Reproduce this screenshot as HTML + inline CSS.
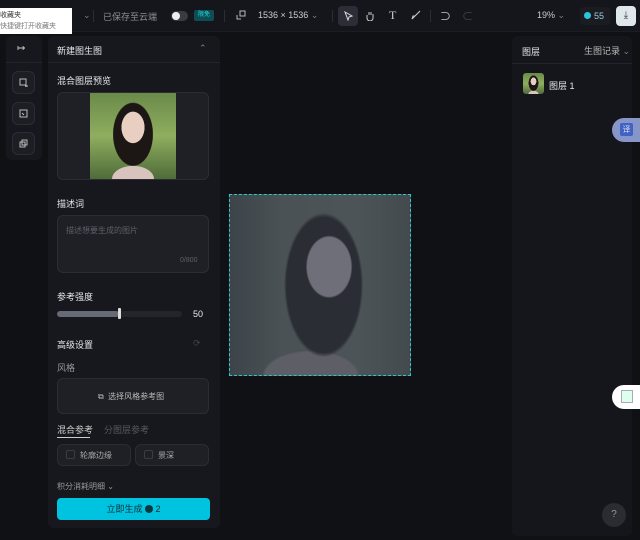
<!DOCTYPE html>
<html><head><meta charset="utf-8"><style>
*{margin:0;padding:0;box-sizing:border-box}
body{width:640px;height:540px;background:#101115;font-family:"Liberation Sans","Noto Sans CJK SC",sans-serif;color:#d8dae0;position:relative;overflow:hidden;font-size:9px}
.abs{position:absolute}
.top{left:0;top:0;width:640px;height:32px;background:#15161b;border-bottom:1px solid #1c1d22}
.panel{background:#17181d;border-radius:6px}
.t{color:#e6e8ec;font-size:9px}
.g{color:#7b7f88}
.box{background:#1f2026;border:1px solid #2b2d33;border-radius:6px}
.photo{background:radial-gradient(ellipse 22% 30% at 50% 40%,#e9cfc2 60%,transparent 62%),radial-gradient(ellipse 38% 60% at 50% 48%,#1c1714 60%,transparent 62%),radial-gradient(ellipse 40% 25% at 50% 100%,#d8c4bc 60%,transparent 62%),linear-gradient(#6a8a4a,#8fae5e 50%,#4f6b3a)}
.cphoto{background:radial-gradient(ellipse 20% 27% at 55% 40%,#6e6f78 60%,transparent 64%),radial-gradient(ellipse 34% 62% at 52% 50%,#2a2d33 60%,transparent 64%),radial-gradient(ellipse 42% 22% at 45% 100%,#5d5e66 60%,transparent 64%),linear-gradient(90deg,#3c4449,#4a5256 30%,#4c5458 70%,#424a4e)}
</style></head><body>
<div class="abs top"></div>
<div class="abs" style="left:0;top:8px;width:72px;height:26px;background:#fff;font-size:7px;color:#333;line-height:11px;padding-top:2px">收藏夹<br><span style="color:#777">快捷键打开收藏夹</span></div>
<div class="abs g" style="left:83px;top:10px;font-size:9px">⌄</div>
<div class="abs" style="left:93px;top:10px;width:1px;height:12px;background:#2c2d33"></div>
<div class="abs g" style="left:103px;top:10px;font-size:9px;color:#8a8e96">已保存至云端</div>
<div class="abs" style="left:171px;top:11px;width:17px;height:10px;border-radius:5px;background:#3a3b41"><div style="width:8px;height:8px;border-radius:4px;background:#eee;margin:1px"></div></div>
<div class="abs" style="left:194px;top:10px;width:20px;height:11px;background:#0f4d55;color:#2dd;font-size:6px;text-align:center;line-height:11px;border-radius:2px">限免</div>
<div class="abs" style="left:224px;top:10px;width:1px;height:12px;background:#2c2d33"></div>
<svg class="abs" style="left:236px;top:10px" width="10" height="10" viewBox="0 0 10 10" fill="none" stroke="#bbb"><rect x="4" y="1" width="5" height="5"/><path d="M1 5v4h4"/></svg>
<div class="abs" style="left:258px;top:10px;font-size:9px;color:#ccc">1536 × 1536 <span class="g">⌄</span></div>
<div class="abs" style="left:332px;top:10px;width:1px;height:12px;background:#2c2d33"></div>
<div class="abs" style="left:338px;top:6px;width:20px;height:20px;background:#2b2e36;border-radius:4px"></div>
<svg class="abs" style="left:343px;top:11px" width="10" height="10" viewBox="0 0 10 10" fill="none" stroke="#ddd"><path d="M2 1l7 4-3 1-1 3z"/></svg>
<svg class="abs" style="left:365px;top:10px" width="10" height="11" viewBox="0 0 10 11" fill="none" stroke="#ccc"><path d="M2 5v3a3 3 0 0 0 6 0V4M4 5V2M6 5V2"/></svg>
<div class="abs" style="left:389px;top:8px;font-size:12px;color:#ccc;font-family:'Liberation Serif'">T</div>
<svg class="abs" style="left:411px;top:10px" width="10" height="10" viewBox="0 0 10 10" fill="none" stroke="#ccc"><path d="M9 1L4 6M4 6L1 9l1-3z"/></svg>
<div class="abs" style="left:430px;top:10px;width:1px;height:12px;background:#2c2d33"></div>
<div class="abs" style="left:440px;top:8px;font-size:11px;color:#ccc">⊃</div>
<div class="abs" style="left:462px;top:8px;font-size:11px;color:#444">⊂</div>
<div class="abs" style="left:537px;top:10px;font-size:9px;color:#ccc">19% <span class="g">⌄</span></div>
<div class="abs" style="left:580px;top:7px;width:30px;height:18px;background:#1b1c21;border-radius:4px;color:#9ccbe0;font-size:9px;line-height:18px;padding-left:4px"><span style="display:inline-block;width:7px;height:7px;border-radius:4px;background:#2cc6dc;margin-right:3px"></span>55</div>
<div class="abs" style="left:616px;top:6px;width:20px;height:20px;background:#dfe6ec;border-radius:4px;color:#333;text-align:center;font-size:10px;line-height:20px">⤓</div>

<div class="abs panel" style="left:6px;top:36px;width:36px;height:124px"></div>
<div class="abs" style="left:17px;top:43px;color:#ccc;font-size:10px">↦</div>
<div class="abs" style="left:6px;top:62px;width:36px;height:1px;background:#24252b"></div>
<div class="abs box" style="left:12px;top:71px;width:23px;height:23px;background:#1d1e23"></div>
<div class="abs box" style="left:12px;top:102px;width:23px;height:23px;background:#1d1e23"></div>
<div class="abs box" style="left:12px;top:132px;width:23px;height:23px;background:#1d1e23"></div>
<svg class="abs" style="left:19px;top:78px" width="9" height="9" viewBox="0 0 9 9" fill="none" stroke="#bbb"><rect x="1" y="1" width="6" height="6"/><path d="M7 6v3M6 8h3"/></svg>
<svg class="abs" style="left:19px;top:109px" width="9" height="9" viewBox="0 0 9 9" fill="none" stroke="#bbb"><path d="M1 1h7v7H1zM3 4l2 2"/></svg>
<svg class="abs" style="left:19px;top:139px" width="9" height="9" viewBox="0 0 9 9" fill="none" stroke="#bbb"><rect x="1" y="3" width="5" height="5"/><rect x="3" y="1" width="5" height="5"/></svg>

<div class="abs panel" style="left:48px;top:36px;width:172px;height:492px"></div>
<div class="abs t" style="left:57px;top:44px">新建图生图</div>
<div class="abs g" style="left:199px;top:43px">⌃</div>
<div class="abs" style="left:48px;top:62px;width:172px;height:1px;background:#24252b"></div>
<div class="abs t" style="left:57px;top:74px">混合图层预览</div>
<div class="abs box" style="left:57px;top:92px;width:152px;height:88px"></div>
<div class="abs photo" style="left:90px;top:93px;width:86px;height:86px"></div>
<div class="abs t" style="left:57px;top:197px">描述词</div>
<div class="abs box" style="left:57px;top:215px;width:152px;height:58px"></div>
<div class="abs" style="left:66px;top:225px;color:#5c6068;font-size:8px">描述想要生成的图片</div>
<div class="abs" style="left:180px;top:257px;color:#5c6068;font-size:7px">0/800</div>
<div class="abs t" style="left:57px;top:290px">参考强度</div>
<div class="abs" style="left:57px;top:311px;width:125px;height:6px;border-radius:3px;background:#23252b"></div>
<div class="abs" style="left:57px;top:311px;width:62px;height:6px;border-radius:3px;background:#656a74"></div>
<div class="abs" style="left:118px;top:308px;width:3px;height:11px;background:#ddd;border-radius:1px"></div>
<div class="abs t" style="left:193px;top:309px">50</div>
<div class="abs t" style="left:57px;top:338px">高级设置</div>
<div class="abs" style="left:193px;top:338px;color:#444">⟳</div>
<div class="abs g" style="left:57px;top:361px;color:#999">风格</div>
<div class="abs box" style="left:57px;top:378px;width:152px;height:36px"></div>
<div class="abs" style="left:98px;top:391px;color:#bbb;font-size:8px">⧉ &nbsp;选择风格参考图</div>
<div class="abs t" style="left:57px;top:423px;color:#ccc">混合参考</div>
<div class="abs g" style="left:104px;top:423px;color:#555a62">分图层参考</div>
<div class="abs" style="left:57px;top:437px;width:33px;height:1px;background:#ccc"></div>
<div class="abs box" style="left:57px;top:444px;width:74px;height:22px"></div>
<div class="abs box" style="left:135px;top:444px;width:74px;height:22px"></div>
<div class="abs" style="left:66px;top:450px;width:9px;height:9px;border:1px solid #3a3c42;border-radius:2px"></div>
<div class="abs" style="left:144px;top:450px;width:9px;height:9px;border:1px solid #3a3c42;border-radius:2px"></div>
<div class="abs" style="left:80px;top:450px;color:#aaa;font-size:8px">轮廓边缘</div>
<div class="abs" style="left:158px;top:450px;color:#aaa;font-size:8px">景深</div>
<div class="abs g" style="left:57px;top:481px;color:#999;font-size:8px">积分消耗明细 ⌄</div>
<div class="abs" style="left:57px;top:498px;width:153px;height:22px;background:#00c3df;border-radius:4px;color:#08313a;text-align:center;line-height:22px;font-size:9px">立即生成 <span style="display:inline-block;width:8px;height:8px;border-radius:4px;background:#0b3740;vertical-align:-1px"></span> 2</div>

<div class="abs cphoto" style="left:229px;top:194px;width:182px;height:182px"></div>
<div class="abs" style="left:229px;top:194px;width:182px;height:182px;border:1px dashed #2fc4cf"></div>

<div class="abs panel" style="left:512px;top:36px;width:120px;height:500px;background:#15161b"></div>
<div class="abs t" style="left:522px;top:45px">图层</div>
<div class="abs g" style="left:584px;top:44px;color:#bbb">生图记录 <span class="g">⌄</span></div>
<div class="abs" style="left:512px;top:63px;width:120px;height:1px;background:#24252b"></div>
<div class="abs photo" style="left:523px;top:73px;width:21px;height:21px;border-radius:3px"></div>
<div class="abs t" style="left:549px;top:79px">图层 1</div>
<div class="abs" style="left:612px;top:118px;width:30px;height:24px;border-radius:12px 0 0 12px;background:#8795c8"></div>
<div class="abs" style="left:620px;top:123px;width:13px;height:13px;background:#3f62c4;border-radius:2px;color:#dde;font-size:8px;text-align:center;line-height:13px">译</div>
<div class="abs" style="left:612px;top:385px;width:30px;height:24px;border-radius:12px 0 0 12px;background:#fff"></div>
<div class="abs" style="left:621px;top:390px;width:12px;height:13px;border:1px solid #aab;background:#dfe"></div>
<div class="abs" style="left:602px;top:503px;width:24px;height:24px;border-radius:12px;background:#2a2c32;color:#999;text-align:center;line-height:24px;font-size:10px">?</div>
</body></html>
